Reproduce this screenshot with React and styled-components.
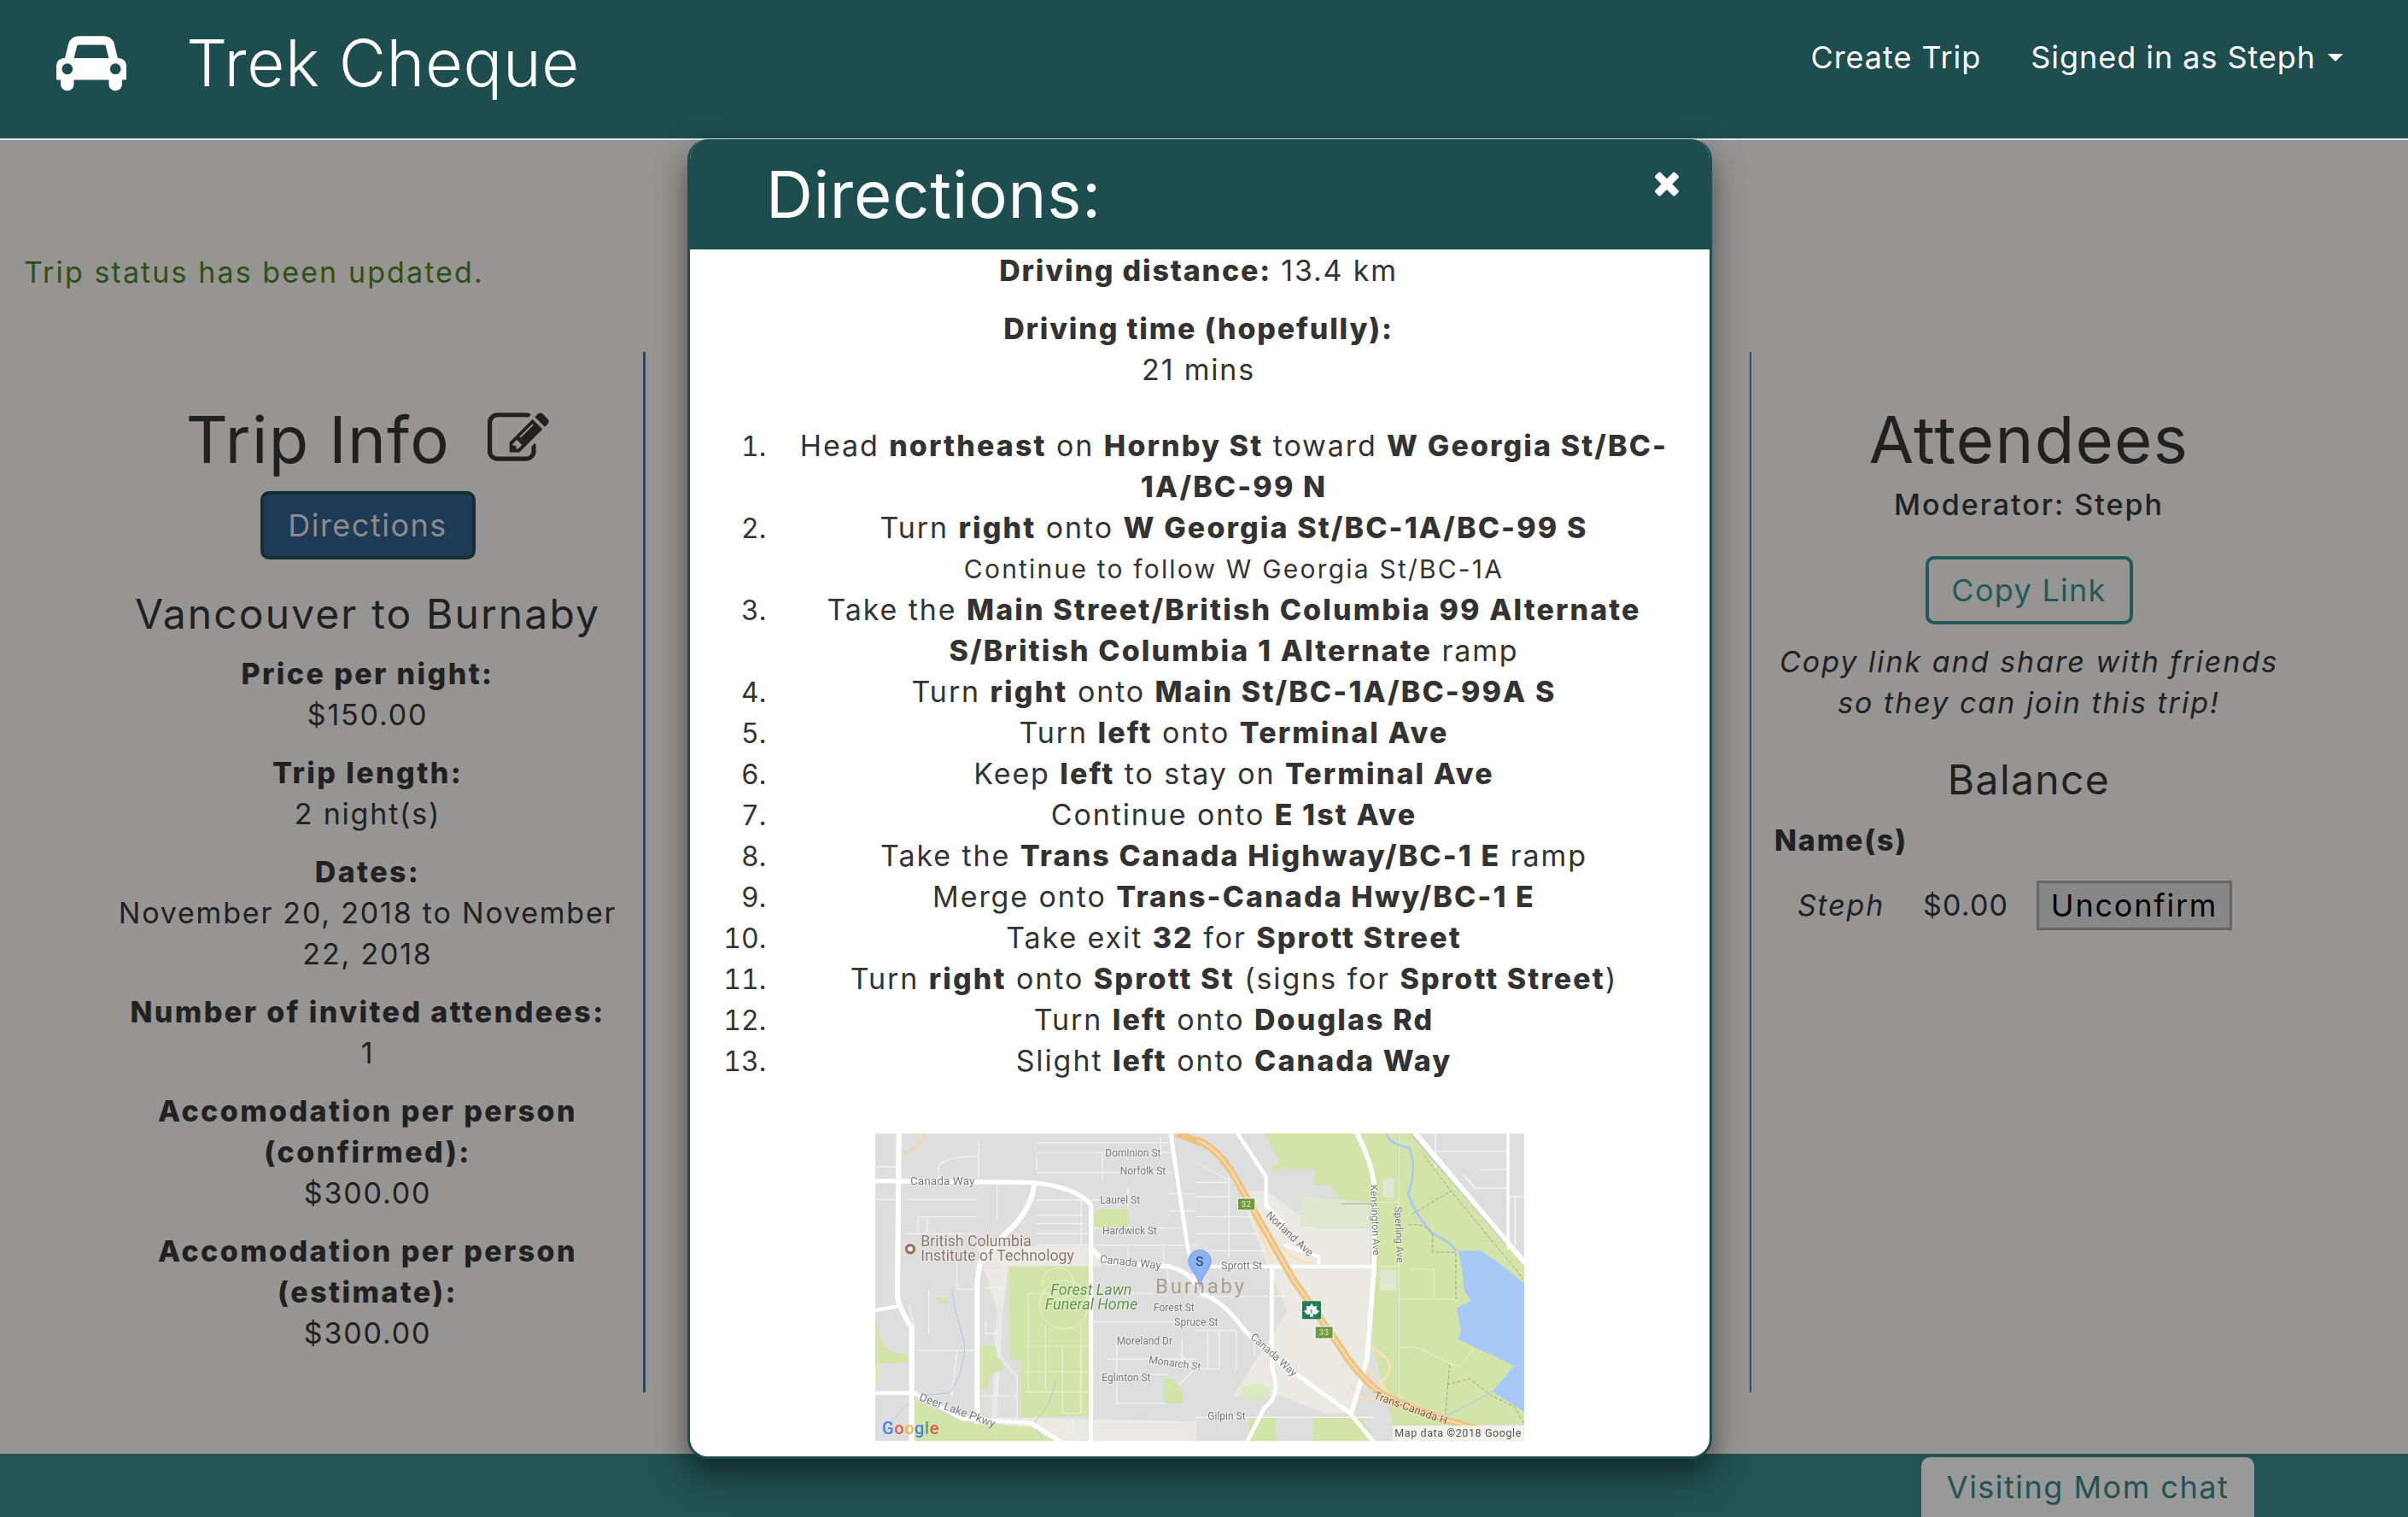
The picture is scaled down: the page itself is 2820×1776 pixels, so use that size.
import React from "react";
import styled, { createGlobalStyle } from "styled-components";

const Global = createGlobalStyle`
  html, body { margin: 0; padding: 0; background: #969593; }
  body { font-family: Inter, "Liberation Sans", sans-serif; font-size: 34px; line-height: 48px; color: #212121; letter-spacing: 1.8px; }
  * { box-sizing: border-box; }
`;

const Page = styled.div`
  position: relative;
  width: 2820px;
  height: 1776px;
  overflow: hidden;
  display: flex;
  flex-direction: column;
`;

const Nav = styled.nav`
  height: 164px;
  flex: none;
  background: #1d4d4f;
  border-bottom: 2px solid #e4e4e4;
  display: flex;
  align-items: flex-start;
  justify-content: space-between;
  padding: 0 76px 0 66px;
  color: #fff;
`;

const Brand = styled.div`
  display: flex;
  align-items: center;
  gap: 70px;
  height: 145px;
`;

const BrandName = styled.span`
  font-size: 76px;
  line-height: 1;
  font-weight: 300;
  letter-spacing: 0.6px;
`;

const NavLinks = styled.div`
  display: flex;
  align-items: center;
  gap: 58px;
  height: 134px;
  font-size: 36px;
  letter-spacing: 0.95px;
  font-weight: 400;
`;

const NavLink = styled.span`
  display: inline-flex;
  align-items: center;
  gap: 14px;
`;

const Caret = styled.i`
  width: 0;
  height: 0;
  border-left: 9px solid transparent;
  border-right: 9px solid transparent;
  border-top: 9px solid #fff;
`;

const Main = styled.main`
  flex: 1;
  display: flex;
  flex-direction: column;
`;

const Flash = styled.p`
  margin: 131px 0 0 28px;
  height: 48px;
  color: #2d5015;
  letter-spacing: 2.1px;
`;

const Columns = styled.div`
  margin-top: 69px;
  display: flex;
  justify-content: space-between;
  height: 1218px;
`;

const SideLeft = styled.section`
  width: 648px;
  margin-left: 108px;
  border-right: 3px solid #1d4f6c;
  text-align: center;
  padding: 62px 25px 0;
`;

const SideRight = styled.section`
  width: 652px;
  margin-right: 119px;
  border-left: 2px solid #1d4f6c;
  text-align: center;
  padding: 62px 0 0;
`;

const Title = styled.h1`
  margin: 0;
  font-size: 76px;
  line-height: 80px;
  font-weight: 400;
  letter-spacing: 1.3px;
  display: flex;
  justify-content: center;
  align-items: center;
  gap: 44px;
`;

const Primary = styled.button`
  display: block;
  margin: 21px auto 34px;
  width: 252px;
  height: 80px;
  font-family: inherit;
  font-size: 36px;
  line-height: 48px;
  letter-spacing: 1.5px;
  background: #1d3a56;
  color: #8c8c8c;
  border: 4px solid #13302f;
  border-radius: 10px;
  padding: 0;
`;

const Sub = styled.h3`
  margin: 0 0 16px;
  font-size: 48px;
  line-height: 60px;
  font-weight: 400;
  letter-spacing: 2.1px;
`;

const Info = styled.p`
  margin: 0 0 20px;
  b { font-weight: 800; letter-spacing: 2.4px; display: block; }
`;

const Moderator = styled.p`
  margin: 13px 0 36px;
  font-weight: 500;
  letter-spacing: 2px;
`;

const Outline = styled.button`
  display: block;
  margin: 0 auto 20px;
  width: 243px;
  height: 80px;
  font-family: inherit;
  font-size: 36px;
  line-height: 48px;
  letter-spacing: 1.3px;
  color: #22595a;
  background: transparent;
  border: 4px solid #22595a;
  border-radius: 10px;
  padding: 0;
`;

const Hint = styled.p`
  margin: 0 0 36px;
  font-style: italic;
  letter-spacing: 2px;
`;

const Balance = styled.h4`
  margin: 0 0 17px;
  font-size: 48px;
  line-height: 60px;
  font-weight: 400;
  letter-spacing: 1.4px;
`;

const Names = styled.div`
  text-align: left;
  padding-left: 27px;
  font-weight: 800;
`;

const Row = styled.div`
  display: flex;
  align-items: center;
  margin-top: 22px;
  padding-left: 54px;
  height: 60px;
  text-align: left;
`;

const Who = styled.em`
  width: 147px;
`;

const Amount = styled.span`
  width: 133px;
  letter-spacing: 1.2px;
`;

const Plain = styled.button`
  width: 229px;
  height: 58px;
  font-family: inherit;
  font-size: 36px;
  letter-spacing: 1.8px;
  background: #878787;
  color: #000;
  border: 3px solid #666;
  padding: 0;
`;

const Foot = styled.footer`
  position: relative;
  height: 74px;
  flex: none;
  background: #225252;
  display: flex;
  justify-content: flex-end;
  align-items: flex-start;
  padding: 4px 180px 0 0;
  margin-top: auto;
`;

const Chat = styled.div`
  width: 390px;
  height: 80px;
  background: #999;
  border-radius: 10px 10px 0 0;
  color: #225252;
  font-size: 36px;
  text-align: center;
  line-height: 70px;
  letter-spacing: 1.5px;
`;

const Modal = styled.div`
  position: absolute;
  left: 805px;
  top: 163px;
  width: 1200px;
  height: 1545px;
  background: #fff;
  border: 3px solid #1d4d4f;
  border-top: none;
  border-radius: 24px;
  box-shadow: 0 18px 36px rgba(0, 0, 0, 0.5);
  overflow: hidden;
`;

const ModalHead = styled.header`
  height: 129px;
  background: #1d4d4f;
  color: #fff;
  display: flex;
  justify-content: space-between;
  align-items: flex-start;
  padding: 21px 29px 0 89px;
`;

const ModalTitle = styled.h2`
  margin: 0;
  font-size: 76px;
  line-height: 86px;
  font-weight: 400;
  letter-spacing: 0.8px;
`;

const Close = styled.span`
  display: block;
  margin-top: 9px;
  line-height: 0;
`;

const ModalBody = styled.div`
  text-align: center;
  color: #333;
`;

const Line = styled.p`
  margin: 1px 0 20px;
  padding-right: 3px;
  b { font-weight: 800; }
`;

const Steps = styled.ol`
  margin: 41px 18px 61px 98px;
  padding: 0;
  letter-spacing: 1.9px;
  b { font-weight: 800; letter-spacing: 2.1px; }
  li::marker { font-size: 32px; letter-spacing: 0; }
`;

const Small = styled.div`
  font-size: 30px;
  letter-spacing: 2.2px;
`;

const MapWrap = styled.div`
  width: 760px;
  margin: 0 auto;
  line-height: 0;
`;

const CarIcon = () => (
  <svg width="82" height="72" viewBox="0 0 2048 1792" fill="#fff" aria-hidden="true">
    <path d="M480 1088q0-66-47-113t-113-47-113 47-47 113 47 113 113 47 113-47 47-113zm36-320h1016l-89-357q-2-8-14-17.5t-21-9.5h-768q-9 0-21 9.5t-14 17.5zm1372 320q0-66-47-113t-113-47-113 47-47 113 47 113 113 47 113-47 47-113zm160-96v384q0 14-9 23t-23 9h-96v128q0 80-56 136t-136 56-136-56-56-136v-128h-1024v128q0 80-56 136t-136 56-136-56-56-136v-128h-96q-14 0-23-9t-9-23v-384q0-93 65.500-158.500t158.500-65.500h28l105-419q23-94 104-157.500t179-63.500h768q98 0 179 63.500t104 157.500l105 419h28q93 0 158.500 65.500t65.500 158.500z" />
  </svg>
);

const EditIcon = () => (
  <svg width="72" height="72" viewBox="0 0 1792 1792" fill="#212121" aria-hidden="true">
    <path d="M888 1184l116-116-152-152-116 116v56h96v96h56zm440-720q-16-16-33 1l-350 350q-17 17-1 33t33-1l350-350q17-17 1-33zm80 594v190q0 119-84.500 203.500t-203.500 84.500h-832q-119 0-203.500-84.500t-84.500-203.500v-832q0-119 84.500-203.500t203.500-84.500h832q63 0 117 25 15 7 18 23 3 17-9 29l-49 49q-14 14-32 8-23-6-45-6h-832q-66 0-113 47t-47 113v832q0 66 47 113t113 47h832q66 0 113-47t47-113v-126q0-13 9-22l64-64q15-15 35-7t20 29zm-96-738l288 288-672 672h-288v-288zm444 132l-92 92-288-288 92-92q28-28 68-28t68 28l152 152q28 28 28 68t-28 68z" />
  </svg>
);

const CloseIcon = () => (
  <svg width="42" height="42" viewBox="0 0 1792 1792" fill="#fff" aria-hidden="true">
    <path d="M1490 1322q0 40-28 68l-136 136q-28 28-68 28t-68-28l-294-294-294 294q-28 28-68 28t-68-28l-136-136q-28-28-28-68t28-68l294-294-294-294q-28-28-28-68t28-68l136-136q28-28 68-28t68 28l294 294 294-294q28-28 68-28t68 28l136 136q28 28 28 68t-28 68l-294 294 294 294q28 28 28 68z" />
  </svg>
);

const Road = ({ d, w = 14, c = "#fff" }) => <path d={d} fill="none" stroke={c} strokeWidth={w} strokeLinecap="round" strokeLinejoin="round" />;

const Label = ({ x, y, s = 36, c = "#77787a", r, w, i, ls, children }) => (
  <text
    x={x}
    y={y}
    fontFamily="Roboto, sans-serif"
    fontSize={s}
    fill={c}
    fontWeight={w || 400}
    fontStyle={i ? "italic" : "normal"}
    letterSpacing={ls || 0}
    transform={r ? `rotate(${r} ${x} ${y})` : undefined}
    stroke="#fff"
    strokeWidth="5"
    strokeOpacity="0.55"
    paintOrder="stroke"
  >
    {children}
  </text>
);

const MINOR_LEFT = [
  "M640 110H1110", "M640 145H1110", "M640 205V160", "M640 215H1110", "M640 312H860", "M640 365H800", "M640 395H800", "M640 430H830", "M640 470H830",
  "M796 300V470", "M1075 90V150", "M180 310H430", "M222 370H430", "M222 370V430", "M180 430H430", "M255 370V430", "M360 530V625H420", "M500 250V380", "M435 110V245",
  "M295 240V190Q320 160 435 157", "M72 195H150", "M72 310H150", "M842 740H1200", "M842 640H1050", "M920 800V1030", "M890 870H1200", "M890 925H1100", "M920 1025H1090", "M842 1090H1150",
  "M1150 800V900", "M1100 560V600", "M960 480V545", "M1085 480V545", "M842 410H1150", "M842 470H1200", "M870 150V240", "M1105 290H1200", "M1105 350H1200", "M960 270V340",
  "M450 560H510", "M510 620H460", "M460 740V780H495", "M495 770Q490 860 570 930V1080", "M450 1000H570", "M500 940V1000", "M222 840H430", "M190 680L210 760", "M260 630V780", "M360 840L340 1000",
  "M1140 850L1200 910", "M1140 960L1200 900", "M765 1080V1130",
];

const MINOR_CEM = [
  "M610 640H820", "M610 640V985", "M600 825H820", "M600 915H820", "M670 750V985", "M730 830V1060H795V830", "M600 985H820", "M795 750V1060",
];

const MapImage = () => (
  <svg width="760" height="360" viewBox="0 0 760 360" role="img" aria-label="Map of Burnaby">
    <defs>
      <filter id="soft" x="0" y="0" width="100%" height="100%"><feGaussianBlur stdDeviation="0.55" /></filter>
      <clipPath id="mapClip"><rect width="760" height="360" /></clipPath>
    </defs>
    <g clipPath="url(#mapClip)" filter="url(#soft)">
      <rect width="760" height="360" fill="#dedede" />
      <g transform="translate(-24 -26) scale(0.33333)">
        <polygon points="430,475 830,475 870,545 540,545 520,700 500,1075 1200,1090 1200,1158 600,1158 480,1085 500,700" fill="#ebe9e3" />
        <polygon points="540,545 825,545 825,1070 585,1075 585,875 545,870" fill="#d2e4a8" />
        <polygon points="840,365 860,343 960,343 960,410 840,415" fill="#d2e4a8" />
        <polygon points="72,720 100,820 130,850 187,850 187,885 72,885" fill="#d2e4a8" />
        <polygon points="72,885 98,885 90,950 72,955" fill="#dbe8c0" />
        <polygon points="442,825 495,825 500,860 525,900 472,930 470,975 442,975" fill="#d2e4a8" />
        <polygon points="205,1010 380,1090 620,1110 700,1158 205,1158" fill="#d2e4a8" />
        <polygon points="1085,940 1115,940 1155,985 1155,1025 1085,1025" fill="#d2e4a8" />
        <rect x="290" y="655" width="35" height="20" fill="#d2e4a8" />
        {MINOR_LEFT.map((d) => <Road key={d} d={d} w={4} c="#f1f1f1" />)}
        <path d="M345 625Q340 660 365 740T385 850Q370 950 330 990L220 1000Q150 1050 100 1140" fill="none" stroke="#a9c9f6" strokeWidth="3" />
        <path d="M705 940Q700 1020 630 1095L660 1158" fill="none" stroke="#a9c9f6" strokeWidth="3" />
        {MINOR_CEM.map((d) => <Road key={d} d={d} w={3} c="#e9f2d6" />)}
        <circle cx="735" cy="680" r="85" fill="none" stroke="#e9f2d6" strokeWidth="3" />
        <circle cx="715" cy="605" r="55" fill="none" stroke="#e9f2d6" strokeWidth="3" />
        <path d="M1130 78Q1140 80 1215 110" stroke="#ecc17c" strokeWidth="26" fill="none" />
        <path d="M240 78Q245 115 172 150" stroke="#f5d6a4" strokeWidth="8" fill="none" />
        <Road d="M155 78L150 650Q155 690 200 760V1158" w={18} />
        <Road d="M72 245L620 250Q780 265 830 330V480L880 530L1100 545Q1170 560 1200 610" w={16} />
        <Road d="M630 260Q620 350 530 430L440 530L430 600V1090" w={18} />
        <Road d="M830 480V1158" w={15} />
        <Road d="M72 700L150 685" w={12} />
        <Road d="M72 990H210L380 1080L620 1095L720 1158" w={14} />
        <Road d="M1110 78L1170 480L1200 590" w={14} />
        <Label x={195} y={258} s={41}>Canada Way</Label>
        <Label x={880} y={160} s={36}>Dominion St</Label>
        <Label x={932} y={222} s={36}>Norfolk St</Label>
        <Label x={862} y={324} s={36}>Laurel St</Label>
        <Label x={870} y={431} s={36}>Hardwick St</Label>
        <Label x={860} y={532} s={39} r={6}>Canada Way</Label>
        <Label x={1050} y={703} s={36}>Forest St</Label>
        <Label x={1123} y={752} s={36}>Spruce St</Label>
        <Label x={920} y={820} s={36}>Moreland Dr</Label>
        <Label x={1032} y={884} s={36} r={8}>Monarch St</Label>
        <Label x={868} y={948} s={36}>Eglinton St</Label>
        <Label x={224} y={1015} s={40} r={20}>Deer Lake Pkwy</Label>
        <Label x={232} y={473} s={53} c="#8c7466">British Columbia</Label>
        <Label x={232} y={524} s={53} c="#8c7466">Institute of Technology</Label>
        <circle cx="195" cy="484" r="20" fill="#92735f" stroke="#fff" strokeWidth="2" />
        <circle cx="195" cy="484" r="9" fill="#f3f0ee" />
        <Label x={688} y={646} s={54} c="#5e9246" i>Forest Lawn</Label>
        <Label x={668} y={696} s={54} c="#5e9246" i>Funeral Home</Label>
        <text x="96" y="1134" fontFamily="Roboto, sans-serif" fontSize="60" fontWeight="500">
          <tspan fill="#4a7fe0">G</tspan><tspan fill="#dd5b4d">o</tspan><tspan fill="#eab93f">o</tspan><tspan fill="#4a7fe0">g</tspan><tspan fill="#55a860">l</tspan><tspan fill="#dd5b4d">e</tspan>
        </text>
      </g>
      <g transform="translate(376 -26) scale(0.33333)">
        <polygon points="150,280 250,280 420,410 610,410 610,545 625,545 600,870 545,1060 450,1060 300,1000 130,1000 320,700 250,540" fill="#ebe9e3" />
        <polygon points="240,78 565,78 610,200 610,320 510,310 470,260 415,260 415,205 250,205 295,180" fill="#d2e4a8" />
        <polygon points="365,300 620,320 620,405 365,405" fill="#dfe8cf" />
        <polygon points="585,78 762,78 1152,545 1152,1100 690,1105 620,820 625,550" fill="#d2e4a8" />
        <polygon points="1152,605 1060,530 1000,490 920,490 935,560 940,630 965,665 915,690 930,770 920,800 990,835 1050,860 1115,895 1070,950 1040,985 1152,1055" fill="#a8c9f8" />
        <polygon points="185,1075 280,1075 280,1158 185,1158" fill="#d2e4a8" />
        <polygon points="410,1075 580,1075 630,1158 410,1158" fill="#d2e4a8" />
        <rect x="655" y="235" width="40" height="68" fill="#dfe8cf" />
        <rect x="645" y="558" width="58" height="72" fill="#dfe8cf" />
        <ellipse cx="205" cy="985" rx="55" ry="28" fill="#dbe8c0" />
        <Road d="M0 180L110 240" w={3} c="#f1f1f1" />
        <Road d="M0 250H110M0 300H110M0 370H200M0 430H230M0 490H250M115 180V510M0 650H360M80 770V905M40 780V905M0 770H140V905M205 800V860M0 905H80" w={4} c="#f1f1f1" />
        <Road d="M840 140H1095M840 80V200M940 225L980 270H1095M1000 205H1090M1100 300H1152M1120 300V470" w={4} c="#f5f5f5" />
        <Road d="M712 78V1000Q720 1020 760 1040L870 1075" w={3} c="#e8f0d4" />
        <Road d="M712 660H915M755 555H835V655M640 545H712M640 320H712M720 830L780 830L900 890L925 895L975 835" w={3} c="#e8f0d4" />
        <Road d="M510 325H610" w={3} c="#a8a18f" />
        <path d="M670 78Q670 112 750 130Q775 200 745 290Q760 350 830 430Q880 450 915 490" fill="none" stroke="#a8c9f8" strokeWidth="8" />
        <path d="M870 1075L1040 985" fill="none" stroke="#a8c9f8" strokeWidth="3" />
        <g fill="none" stroke="#a99f94" strokeWidth="3" strokeDasharray="12 7">
          <path d="M800 155L895 280L1150 590" />
          <path d="M760 360L895 280" />
          <path d="M745 400Q800 390 830 430V495H912V660" />
          <path d="M890 890L875 1065" />
          <path d="M880 960L960 940L1040 1000L1120 1040L1152 1100" />
        </g>
        <path d="M610 830Q680 860 680 900Q670 960 600 960M610 830Q590 880 620 940M650 950Q680 1020 700 1040M200 370L270 530M300 470Q340 530 410 535" fill="none" stroke="#f9dfb4" strokeWidth="9" />
        <path d="M540 960L580 1010H650" fill="none" stroke="#f9dfb4" strokeWidth="8" />
        <Road d="M565 78Q625 200 625 270V550L600 870L545 1060" w={16} />
        <Road d="M770 78L1152 530" w={18} />
        <path d="M752 78L1090 470" fill="none" stroke="#c9c9c9" strokeWidth="4" />
        <Road d="M40 545H625" w={12} />
        <Road d="M145 78L245 230V330L310 400" w={13} />
        <Road d="M310 470L430 510V545" w={11} />
        <Road d="M265 545V900Q300 1000 240 1040L180 1158" w={14} />
        <Road d="M20 640Q100 670 170 770L290 880L540 1060L620 1158" w={15} />
        <Road d="M1095 78V480" w={10} />
        <Road d="M0 1075H620" w={3} />
        <path d="M0 100Q80 130 140 240L340 590L500 820Q560 920 640 985Q760 1060 1140 1158" fill="none" stroke="#eec486" strokeWidth="26" />
        <path d="M0 100Q80 130 140 240L340 590L500 820Q560 920 640 985Q760 1060 1140 1158" fill="none" stroke="#f7dda9" strokeWidth="6" />
        <Label x={242} y={368} s={39} r={43}>Norland Ave</Label>
        <Label x={88} y={556} s={37}>Sprott St</Label>
        <Label x={612} y={258} s={36} r={88}>Kensington Ave</Label>
        <Label x={697} y={335} s={36} r={88}>Sperling Ave</Label>
        <Label x={188} y={796} s={37} r={42}>Canada Way</Label>
        <Label x={40} y={1082} s={36}>Gilpin St</Label>
        <Label x={622} y={1008} s={38} r={20} c="#7b5a37">Trans-Canada H</Label>
        <g>
          <rect x="144" y="304" width="64" height="45" fill="#fff" />
          <rect x="147" y="307" width="58" height="39" fill="#6c9a3e" />
          <text x="176" y="336" textAnchor="middle" fontFamily="Roboto, sans-serif" fontSize="28" fill="#eef4df">32</text>
          <rect x="416" y="754" width="66" height="46" fill="#fff" />
          <rect x="419" y="757" width="60" height="40" fill="#6c9a3e" />
          <text x="449" y="787" textAnchor="middle" fontFamily="Roboto, sans-serif" fontSize="28" fill="#eef4df">33</text>
          <rect x="372" y="667" width="66" height="63" rx="4" fill="#1f7f57" />
          <path d="M405 675L412 686L424 683L421 696L432 702L420 714L410 712L411 722H399L400 712L390 714L378 702L389 696L386 683L398 686Z" fill="#fff" />
          <text x="405" y="711" textAnchor="middle" fontFamily="Roboto, sans-serif" fontSize="22" fontWeight="700" fill="#1f7f57">1</text>
        </g>
        <rect x="690" y="1104" width="470" height="54" fill="#f5f5f2" fillOpacity="0.85" />
        <text x="697" y="1143" fontFamily="Roboto, sans-serif" fontSize="37.5" fill="#555">Map data ©2018 Google</text>
      </g>
      <text x="328" y="187" fontFamily="Roboto, sans-serif" fontSize="24" letterSpacing="2.8" fill="#ab9f8b">Burnaby</text>
      <g transform="translate(376 -26) scale(0.33333)">
        <path d="M12 615C4 575 -28 555 -28 525A40 38 0 0 1 52 525C52 555 20 575 12 615Z" fill="#8ab2f5" stroke="#6c94dc" strokeWidth="2" />
        <text x="12" y="542" textAnchor="middle" fontFamily="Roboto, sans-serif" fontSize="46" fill="#2b3b55">S</text>
      </g>
    </g>
  </svg>
);

const STEPS = [
  <>Head <b>northeast</b> on <b>Hornby St</b> toward <b>W Georgia St/BC-<br />1A/BC-99 N</b></>,
  <>Turn <b>right</b> onto <b>W Georgia St/BC-1A/BC-99 S</b><Small>Continue to follow W Georgia St/BC-1A</Small></>,
  <>Take the <b>Main Street/British Columbia 99 Alternate<br />S/British Columbia 1 Alternate</b> ramp</>,
  <>Turn <b>right</b> onto <b>Main St/BC-1A/BC-99A S</b></>,
  <>Turn <b>left</b> onto <b>Terminal Ave</b></>,
  <>Keep <b>left</b> to stay on <b>Terminal Ave</b></>,
  <>Continue onto <b>E 1st Ave</b></>,
  <>Take the <b>Trans Canada Highway/BC-1 E</b> ramp</>,
  <>Merge onto <b>Trans-Canada Hwy/BC-1 E</b></>,
  <>Take exit <b>32</b> for <b>Sprott Street</b></>,
  <>Turn <b>right</b> onto <b>Sprott St</b> (signs for <b>Sprott Street</b>)</>,
  <>Turn <b>left</b> onto <b>Douglas Rd</b></>,
  <>Slight <b>left</b> onto <b>Canada Way</b></>,
];

export default function App() {
  return (
    <Page>
      <Global />
      <Nav>
        <Brand>
          <CarIcon />
          <BrandName>Trek Cheque</BrandName>
        </Brand>
        <NavLinks>
          <NavLink>Create Trip</NavLink>
          <NavLink>Signed in as Steph <Caret /></NavLink>
        </NavLinks>
      </Nav>
      <Main>
        <Flash>Trip status has been updated.</Flash>
        <Columns>
          <SideLeft>
            <Title>Trip Info <EditIcon /></Title>
            <Primary>Directions</Primary>
            <Sub>Vancouver to Burnaby</Sub>
            <Info><b>Price per night:</b>$150.00</Info>
            <Info><b>Trip length:</b>2 night(s)</Info>
            <Info><b>Dates:</b>November 20, 2018 to November 22, 2018</Info>
            <Info><b>Number of invited attendees:</b>1</Info>
            <Info><b>Accomodation per person (confirmed):</b>$300.00</Info>
            <Info><b>Accomodation per person (estimate):</b>$300.00</Info>
          </SideLeft>
          <SideRight>
            <Title>Attendees</Title>
            <Moderator>Moderator: Steph</Moderator>
            <Outline>Copy Link</Outline>
            <Hint>Copy link and share with friends<br />so they can join this trip!</Hint>
            <Balance>Balance</Balance>
            <Names>Name(s)</Names>
            <Row>
              <Who>Steph</Who>
              <Amount>$0.00</Amount>
              <Plain>Unconfirm</Plain>
            </Row>
          </SideRight>
        </Columns>
      </Main>
      <Foot>
        <Chat>Visiting Mom chat</Chat>
      </Foot>
      <Modal>
        <ModalHead>
          <ModalTitle>Directions:</ModalTitle>
          <Close><CloseIcon /></Close>
        </ModalHead>
        <ModalBody>
          <Line><b>Driving distance:</b> 13.4 km</Line>
          <Line><b>Driving time (hopefully):</b><br />21 mins</Line>
          <Steps>{STEPS.map((s, i) => <li key={i}>{s}</li>)}</Steps>
          <MapWrap><MapImage /></MapWrap>
        </ModalBody>
      </Modal>
    </Page>
  );
}
